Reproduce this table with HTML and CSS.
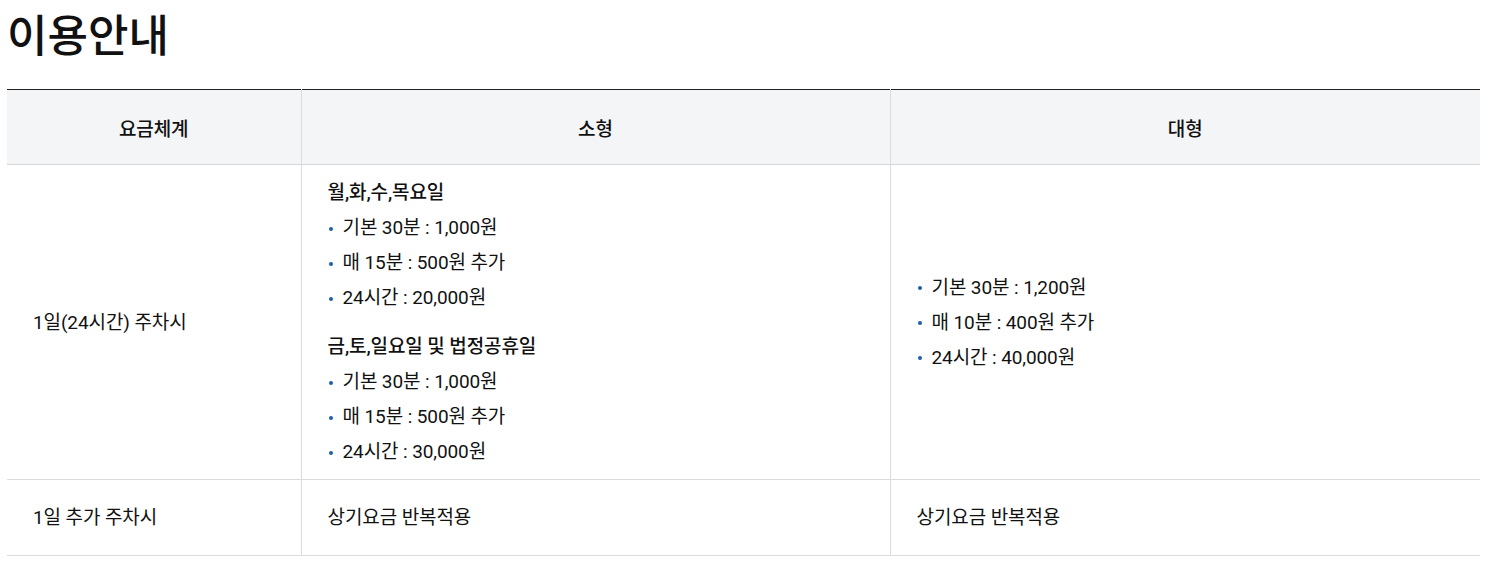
FILE: index.html
```html
<!DOCTYPE html>
<html lang="ko">
<head>
<meta charset="utf-8">
<link rel="stylesheet" href="styles.css">
</head>
<body>
<div class="page">
  <h1 class="title">이용안내</h1>
  <table class="fee">
    <colgroup>
      <col class="c1"><col class="c2"><col class="c3">
    </colgroup>
    <thead>
      <tr><th>요금체계</th><th>소형</th><th>대형</th></tr>
    </thead>
    <tbody>
      <tr class="r1">
        <td>1일(24시간) 주차시</td>
        <td>
          <p class="grp">월,화,수,목요일</p>
          <ul class="dots">
            <li>기본 30분 : 1,000원</li>
            <li>매 15분 : 500원 추가</li>
            <li>24시간 : 20,000원</li>
          </ul>
          <p class="grp second">금,토,일요일 및 법정공휴일</p>
          <ul class="dots">
            <li>기본 30분 : 1,000원</li>
            <li>매 15분 : 500원 추가</li>
            <li>24시간 : 30,000원</li>
          </ul>
        </td>
        <td>
          <ul class="dots">
            <li>기본 30분 : 1,200원</li>
            <li>매 10분 : 400원 추가</li>
            <li>24시간 : 40,000원</li>
          </ul>
        </td>
      </tr>
      <tr class="r2">
        <td>1일 추가 주차시</td>
        <td>상기요금 반복적용</td>
        <td>상기요금 반복적용</td>
      </tr>
    </tbody>
  </table>
</div>
</body>
</html>
```

FILE: styles.css
```css
html, body {
  margin: 0;
  padding: 0;
  background: #fff;
}
body {
  font-family: Roboto, "Noto Sans CJK KR", sans-serif;
  color: #111;
}
.page {
  padding: 8px 11px 0 7px;
}
.title {
  margin: 0;
  font-size: 44px;
  line-height: 50px;
  font-weight: 500;
  letter-spacing: 0;
  color: #111;
  font-family: "Noto Sans CJK KR", sans-serif;
}
.fee {
  margin-top: 31px;
  width: 1473px;
  border-collapse: collapse;
  table-layout: fixed;
  border-top: 1px solid #222;
  font-size: 19px;
  letter-spacing: -0.1px;
}
.c1 { width: 294px; }
.c2 { width: 589px; }
.c3 { width: 590px; }
.fee th {
  height: 74px;
  padding: 0;
  background: #f4f5f7;
  font-weight: 500;
  font-size: 19px;
  text-align: center;
  border-bottom: 1px solid #d8d8d8;
  border-left: 1px solid #dcdcdc;
}
.fee th:first-child,
.fee td:first-child {
  border-left: none;
}
.fee td {
  padding: 0 26px;
  border-bottom: 1px solid #dcdcdc;
  border-left: 1px solid #dcdcdc;
  vertical-align: middle;
  line-height: 35px;
}
.r1 td {
  padding-top: 10px;
  padding-bottom: 10px;
}
.r2 td {
  height: 75px;
  padding-top: 0;
  padding-bottom: 0;
}
.grp {
  margin: 0;
  font-weight: 500;
}
.grp.second {
  margin-top: 14px;
}
.dots {
  list-style: none;
  margin: 0;
  padding: 0;
}
.dots li {
  display: flex;
  align-items: center;
}
.dots li::before {
  content: "";
  width: 4px;
  height: 4px;
  border-radius: 50%;
  background: #1d5fa6;
  margin: 2px 10px 0 1px;
  flex: none;
}
```
